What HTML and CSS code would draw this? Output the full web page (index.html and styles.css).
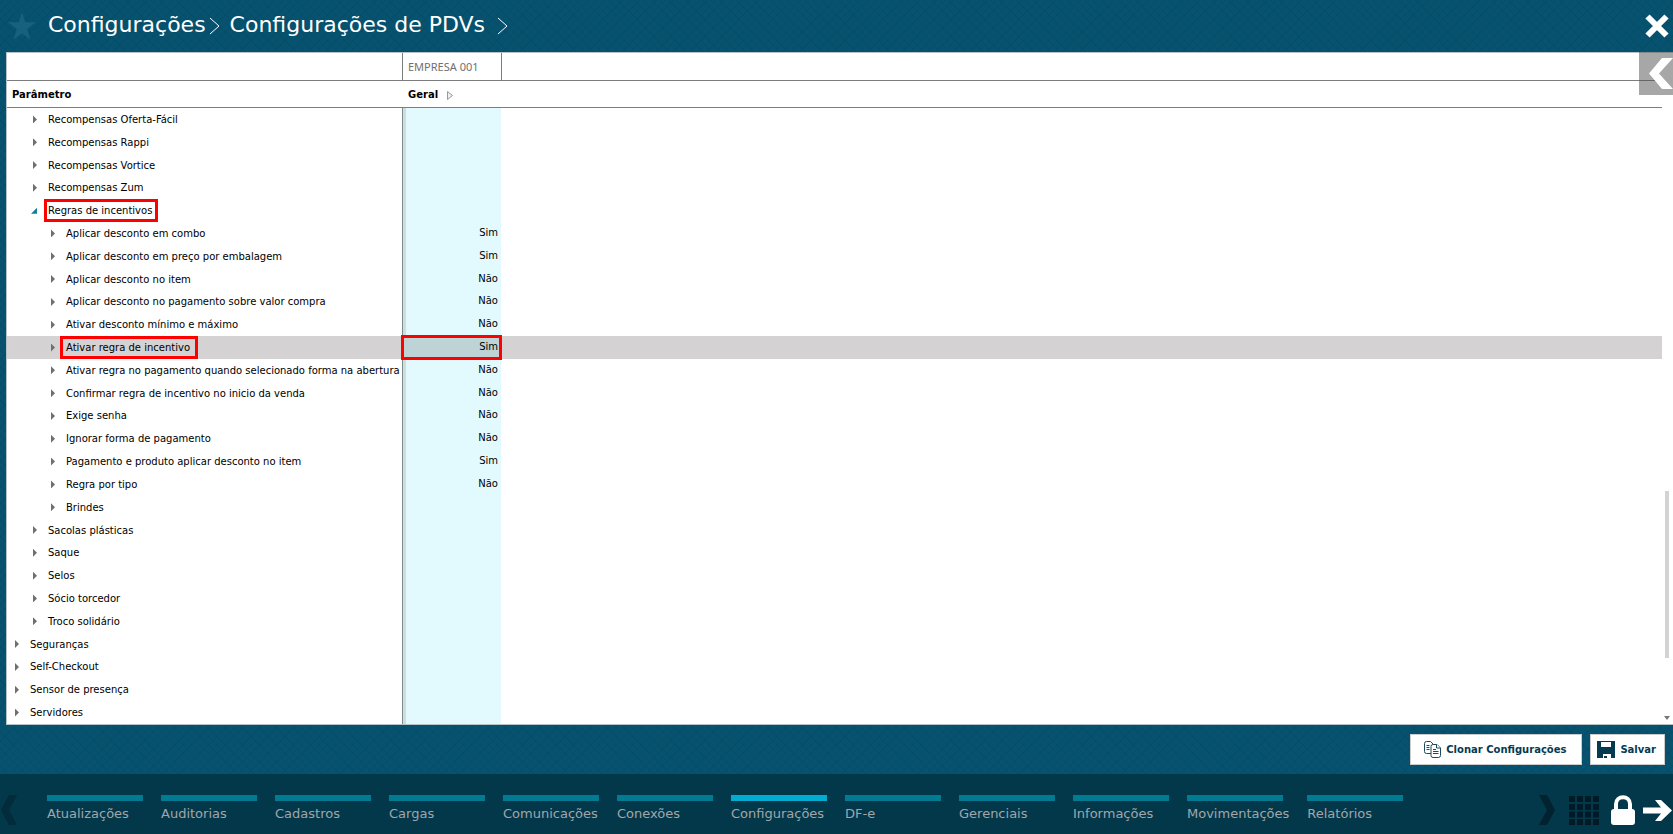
FILE: index.html
```html
<!DOCTYPE html>
<html lang="pt-BR">
<head>
  <meta charset="UTF-8">
  <title>Configurações de PDVs</title>
  <meta name="viewport" content="width=device-width, initial-scale=1">
  <link rel="stylesheet" href="styles.css">
</head>
<body>
  <header class="topbar">
    <button type="button" class="icon-btn star" aria-label="Favorito">
      <svg width="28" height="28" viewBox="0 0 28 28"><path fill="#17617e" d="M14 0l3.300 10.300H28l-8.700 6.600L22.600 28 14 21.300 5.400 28l3.300-11.100L0 10.300h10.700z"/></svg>
    </button>
    <nav class="breadcrumb">
      <a href="#">Configurações</a>
      <svg class="sep" width="12" height="18" viewBox="0 0 12 18"><path d="M1 1l9 8-9 8"/></svg>
      <a href="#">Configurações de PDVs</a>
      <svg class="sep sep-last" width="12" height="18" viewBox="0 0 12 18"><path d="M1 1l9 8-9 8"/></svg>
    </nav>
    <button type="button" class="icon-btn close" aria-label="Fechar">
      <svg width="24" height="24" viewBox="0 0 24 24"><path fill="none" stroke="#fff" stroke-width="6" d="M2.500 2.500l19 19M21.500 2.500l-19 19"/></svg>
    </button>
  </header>

  <main class="panel">
    <table class="grid">
      <colgroup>
        <col class="col-param">
        <col class="col-geral">
        <col>
      </colgroup>
      <thead>
        <tr class="company"><th></th><th>EMPRESA 001</th><th></th></tr>
        <tr class="titles">
          <th>Parâmetro</th>
          <th>Geral <svg class="expand" width="6" height="9" viewBox="0 0 6 9"><path fill="#eee" stroke="#999" d="M.5.5v8l5-4z"/></svg></th>
          <th></th>
        </tr>
      </thead>
      <tbody>
        <tr class="l2"><td><button type="button">Recompensas Oferta-Fácil</button></td><td></td><td></td></tr>
        <tr class="l2"><td><button type="button">Recompensas Rappi</button></td><td></td><td></td></tr>
        <tr class="l2"><td><button type="button">Recompensas Vortice</button></td><td></td><td></td></tr>
        <tr class="l2"><td><button type="button">Recompensas Zum</button></td><td></td><td></td></tr>
        <tr class="l2 open"><td><button type="button"><span class="mark">Regras de incentivos</span></button></td><td></td><td></td></tr>
        <tr class="l3"><td><button type="button">Aplicar desconto em combo</button></td><td>Sim</td><td></td></tr>
        <tr class="l3"><td><button type="button">Aplicar desconto em preço por embalagem</button></td><td>Sim</td><td></td></tr>
        <tr class="l3"><td><button type="button">Aplicar desconto no item</button></td><td>Não</td><td></td></tr>
        <tr class="l3"><td><button type="button">Aplicar desconto no pagamento sobre valor compra</button></td><td>Não</td><td></td></tr>
        <tr class="l3"><td><button type="button">Ativar desconto mínimo e máximo</button></td><td>Não</td><td></td></tr>
        <tr class="l3 selected"><td><button type="button"><span class="mark">Ativar regra de incentivo</span></button></td><td>Sim</td><td></td></tr>
        <tr class="l3"><td><button type="button">Ativar regra no pagamento quando selecionado forma na abertura</button></td><td>Não</td><td></td></tr>
        <tr class="l3"><td><button type="button">Confirmar regra de incentivo no inicio da venda</button></td><td>Não</td><td></td></tr>
        <tr class="l3"><td><button type="button">Exige senha</button></td><td>Não</td><td></td></tr>
        <tr class="l3"><td><button type="button">Ignorar forma de pagamento</button></td><td>Não</td><td></td></tr>
        <tr class="l3"><td><button type="button">Pagamento e produto aplicar desconto no item</button></td><td>Sim</td><td></td></tr>
        <tr class="l3"><td><button type="button">Regra por tipo</button></td><td>Não</td><td></td></tr>
        <tr class="l3"><td><button type="button">Brindes</button></td><td></td><td></td></tr>
        <tr class="l2"><td><button type="button">Sacolas plásticas</button></td><td></td><td></td></tr>
        <tr class="l2"><td><button type="button">Saque</button></td><td></td><td></td></tr>
        <tr class="l2"><td><button type="button">Selos</button></td><td></td><td></td></tr>
        <tr class="l2"><td><button type="button">Sócio torcedor</button></td><td></td><td></td></tr>
        <tr class="l2"><td><button type="button">Troco solidário</button></td><td></td><td></td></tr>
        <tr class="l1"><td><button type="button">Seguranças</button></td><td></td><td></td></tr>
        <tr class="l1"><td><button type="button">Self-Checkout</button></td><td></td><td></td></tr>
        <tr class="l1"><td><button type="button">Sensor de presença</button></td><td></td><td></td></tr>
        <tr class="l1"><td><button type="button">Servidores</button></td><td></td><td></td></tr>
      </tbody>
    </table>
    <div class="scrollbar">
      <div class="thumb"></div>
      <svg width="6" height="4" viewBox="0 0 6 4"><path fill="#777" d="M0 0h6L3 4z"/></svg>
    </div>
    <button type="button" class="icon-btn drawer" aria-label="Abrir painel">
      <svg width="24" height="31" viewBox="0 0 24 31"><path fill="#fff" d="M13 0h11L10 15.500 24 31H13L0 15.500z"/></svg>
    </button>
  </main>

  <div class="actions">
    <button type="button" class="action">
      <svg width="17" height="17" viewBox="0 0 17 17" fill="#fff" stroke="#1d4a5c"><path d="M2.500.500h4l3 3v9h-7a2 2 0 0 1-2-2v-8a2 2 0 0 1 2-2z"/><path d="M2.500 4.500h3m-3 2h3m-3 2h3"/><path d="M9 3.500h4l3.500 3.500v7.500a2 2 0 0 1-2 2H9a2 2 0 0 1-2-2v-9a2 2 0 0 1 2-2z"/><path d="M12.500 3.500V7h4M9 8.500h3m-3 2h5.500m-5.500 2h5.500"/></svg>
      Clonar Configurações
    </button>
    <button type="button" class="action save">
      <svg width="18" height="17" viewBox="0 0 18 17"><path fill="#053a50" fill-rule="evenodd" d="M0 0h18v17h-4v-4H6v4H0zM4 1v5h10V1zM7 15h3v2H7z"/></svg>
      Salvar
    </button>
  </div>

  <footer class="menu">
    <button type="button" class="icon-btn" aria-label="Anterior">
      <svg width="16" height="30" viewBox="0 0 16 30"><path fill="#022b3b" d="M8 0h8L8 15l8 15H8L0 15z"/></svg>
    </button>
    <nav class="modules">
      <a href="#">Atualizações</a>
      <a href="#">Auditorias</a>
      <a href="#">Cadastros</a>
      <a href="#">Cargas</a>
      <a href="#">Comunicações</a>
      <a href="#">Conexões</a>
      <a href="#" class="active">Configurações</a>
      <a href="#">DF-e</a>
      <a href="#">Gerenciais</a>
      <a href="#">Informações</a>
      <a href="#">Movimentações</a>
      <a href="#">Relatórios</a>
    </nav>
    <div class="tools">
      <button type="button" class="icon-btn" aria-label="Próximo">
        <svg width="16" height="30" viewBox="0 0 16 30"><path fill="#02222f" d="M8 0H0l8 15-8 15h8l8-15z"/></svg>
      </button>
      <button type="button" class="icon-btn apps" aria-label="Aplicativos">
        <svg width="30" height="29" viewBox="0 0 30 29"><path fill="none" stroke="#011b26" stroke-width="6" stroke-dasharray="6 2" d="M0 3h30M0 11h30M0 18.500h30M0 26h30"/></svg>
      </button>
      <button type="button" class="icon-btn lock" aria-label="Bloquear">
        <svg width="24" height="30" viewBox="0 0 24 30"><path fill="none" stroke="#fff" stroke-width="4" d="M5 15V9c0-9 14-9 14 0v6"/><rect y="14" width="24" height="16" rx="3" fill="#fff"/></svg>
      </button>
      <button type="button" class="icon-btn exit" aria-label="Sair">
        <svg width="29" height="21" viewBox="0 0 29 21"><path fill="#fff" d="M0 7.500h18L12 0h6l11 10.500L18 21h-6l6-7.500H0z"/></svg>
      </button>
    </div>
  </footer>
</body>
</html>
```
FILE: styles.css
```css
* {
  box-sizing: border-box;
}
body {
  margin: 0;
  height: 100vh;
  display: flex;
  flex-direction: column;
  overflow: hidden;
  font-family: Verdana, "DejaVu Sans", sans-serif;
  font-size: 10px;
  color: #000;
  background-color: #06526f;
  background-image:
    repeating-linear-gradient(45deg, rgba(0, 30, 50, 0.06) 0 1px, transparent 1px 6px),
    repeating-linear-gradient(-45deg, rgba(0, 30, 50, 0.06) 0 1px, transparent 1px 6px);
}
svg {
  display: block;
  flex: none;
}
button {
  font: inherit;
  color: inherit;
  cursor: pointer;
}
a {
  color: inherit;
  text-decoration: none;
}
.icon-btn {
  display: block;
  padding: 0;
  border: none;
  background: none;
}

/* topo */
.topbar {
  display: flex;
  align-items: center;
  flex: none;
  height: 52px;
  padding: 0 4px 0 8px;
  color: #fff;
}
.breadcrumb {
  display: flex;
  align-items: center;
  margin: 0 auto 4px 12px;
  font-size: 22px;
}
.sep {
  margin: 4px 9px 0 3px;
  fill: none;
  stroke: #fff;
  stroke-width: 1;
}
.sep-last {
  margin-left: 12px;
}

/* grade de parâmetros */
.panel {
  position: relative;
  display: flex;
  flex: 1;
  min-height: 0;
  margin-left: 6px;
  padding-right: 1px;
  background: #fff;
  border: 1px solid #b5c3c9;
  border-right: none;
}
.grid {
  flex: 1;
  width: 100%;
  height: 100%;
  table-layout: fixed;
  border-collapse: separate;
  border-spacing: 0;
}
.col-param {
  width: 395px;
}
.col-geral {
  width: 99px;
}
.grid th {
  height: 27px;
  padding: 0 5px;
  text-align: left;
  border-bottom: 1px solid #7d7d7d;
}
.grid .company th {
  height: 28px;
  font-family: "Segoe UI", "Noto Sans", sans-serif;
  font-size: 11px;
  font-weight: 400;
  color: #707070;
}
.company th + th {
  border-left: 1px solid #7d7d7d;
}
.titles th + th {
  padding-left: 6px;
}
.expand {
  display: inline-block;
  margin-left: 5px;
  vertical-align: -2px;
}
.grid td {
  height: 22px;
  padding: 0;
  line-height: 19px;
}
.grid td:nth-child(2) {
  padding: 0 3px 2px 0;
  text-align: right;
  background: linear-gradient(to right, #7d8b8d 1px, #cbdfe1 1px 4px, #e2fafd 4px);
}
.grid td button {
  display: flex;
  align-items: center;
  gap: 11px;
  padding: 0;
  border: none;
  background: none;
  white-space: nowrap;
}
.grid td button::before {
  content: "";
  width: 4px;
  height: 8px;
  background: #6f6f6f;
  clip-path: polygon(0 0, 100% 50%, 0 100%);
}
.l1 button {
  margin-left: 8px;
}
.l2 button {
  margin-left: 26px;
}
.l3 button {
  margin-left: 44px;
}
.grid .open button {
  margin-left: 24px;
}
.grid .open button::before {
  width: 6px;
  height: 6px;
  background: #12809a;
  clip-path: polygon(100% 0, 100% 100%, 0 100%);
}
.selected td {
  background: #d4d2d3;
}
.grid .selected td:nth-child(2) {
  background: #bed3d5;
  outline: 3px solid #f00;
  outline-offset: -2px;
}
.mark {
  margin-left: -2px;
  padding: 0 4px 0 2px;
  outline: 3px solid #f00;
  outline-offset: -1px;
}
.selected .mark {
  margin-left: -4px;
  padding: 0 6px 0 4px;
}

.scrollbar {
  display: flex;
  flex-direction: column;
  align-items: center;
  justify-content: flex-end;
  flex: none;
  width: 10px;
  padding-bottom: 4px;
}
.thumb {
  width: 4px;
  height: 25%;
  margin-bottom: 58px;
  background: #d3d3d3;
}
.drawer {
  position: absolute;
  top: -1px;
  right: 0;
  padding: 6px 0 6px 10px;
  background: rgba(80, 80, 80, 0.5);
}

/* botões */
.actions {
  display: flex;
  justify-content: flex-end;
  flex: none;
  gap: 8px;
  padding: 9px 8px;
}
.action {
  display: flex;
  align-items: center;
  gap: 5px;
  height: 31px;
  padding: 0 15px 0 13px;
  font-weight: 700;
  color: #053a50;
  background: #fff;
  border: 1px solid #ccc;
}
.save {
  padding: 0 8px 0 6px;
}

/* menu inferior */
.menu {
  display: flex;
  align-items: flex-start;
  flex: none;
  height: 60px;
  padding: 21px 0 0 1px;
  background: #03384b;
}
.modules {
  display: flex;
  flex: 1;
  gap: 18px;
  margin-left: 30px;
  font-size: 13px;
  line-height: 26px;
  color: #a0a6aa;
}
.modules a {
  min-width: 96px;
}
.modules a::before {
  content: "";
  display: block;
  width: 96px;
  height: 6px;
  background: #027a92;
}
.modules .active::before {
  background: #02acd0;
}
.tools {
  display: flex;
  align-items: center;
  padding-right: 1px;
}
.apps {
  margin: 0 12px 0 14px;
}
.lock {
  margin-right: 8px;
}
```
